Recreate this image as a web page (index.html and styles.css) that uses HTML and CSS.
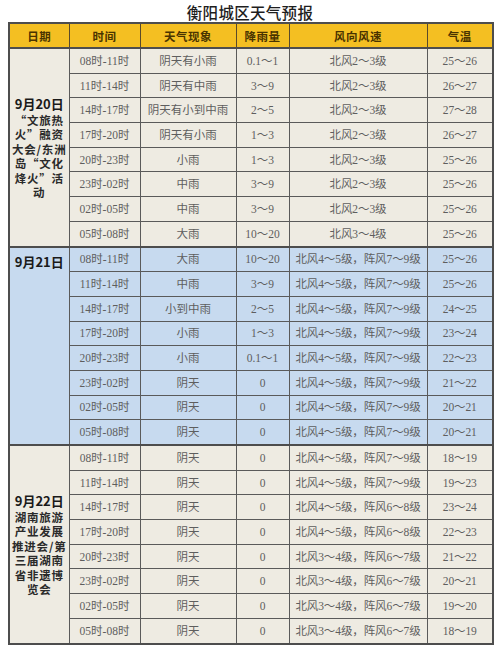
FILE: index.html
```html
<!DOCTYPE html>
<html lang="zh">
<head>
<meta charset="utf-8">
<link rel="stylesheet" href="styles.css">
</head>
<body>
<h1 class="title">衡阳城区天气预报</h1>
<table class="wx">
  <colgroup>
    <col class="c-date"><col class="c-time"><col class="c-wx"><col class="c-rain"><col class="c-wind"><col class="c-temp">
  </colgroup>
  <thead>
    <tr><th>日期</th><th>时间</th><th>天气现象</th><th>降雨量</th><th>风向风速</th><th>气温</th></tr>
  </thead>
  <tbody class="sec beige">
    <tr><td class="date" rowspan="8"><span class="d">9月20日</span><span class="note">“文旅热<br>火”融资<br>大会/东洲<br>岛“文化<br>烽火”活<br>动</span></td><td>08时-11时</td><td>阴天有小雨</td><td>0.1～1</td><td>北风2～3级</td><td>25～26</td></tr>
    <tr><td>11时-14时</td><td>阴天有中雨</td><td>3～9</td><td>北风2～3级</td><td>26～27</td></tr>
    <tr><td>14时-17时</td><td>阴天有小到中雨</td><td>2～5</td><td>北风2～3级</td><td>27～28</td></tr>
    <tr><td>17时-20时</td><td>阴天有小雨</td><td>1～3</td><td>北风2～3级</td><td>26～27</td></tr>
    <tr><td>20时-23时</td><td>小雨</td><td>1～3</td><td>北风2～3级</td><td>25～26</td></tr>
    <tr><td>23时-02时</td><td>中雨</td><td>3～9</td><td>北风2～3级</td><td>25～26</td></tr>
    <tr><td>02时-05时</td><td>中雨</td><td>3～9</td><td>北风2～3级</td><td>25～26</td></tr>
    <tr><td>05时-08时</td><td>大雨</td><td>10～20</td><td>北风3～4级</td><td>25～26</td></tr>
  </tbody>
  <tbody class="sec blue">
    <tr><td class="date top" rowspan="8"><span class="d">9月21日</span></td><td>08时-11时</td><td>大雨</td><td>10～20</td><td>北风4～5级，阵风7～9级</td><td>25～26</td></tr>
    <tr><td>11时-14时</td><td>中雨</td><td>3～9</td><td>北风4～5级，阵风7～9级</td><td>25～26</td></tr>
    <tr><td>14时-17时</td><td>小到中雨</td><td>2～5</td><td>北风4～5级，阵风7～9级</td><td>24～25</td></tr>
    <tr><td>17时-20时</td><td>小雨</td><td>1～3</td><td>北风4～5级，阵风7～9级</td><td>23～24</td></tr>
    <tr><td>20时-23时</td><td>小雨</td><td>0.1～1</td><td>北风4～5级，阵风7～9级</td><td>22～23</td></tr>
    <tr><td>23时-02时</td><td>阴天</td><td>0</td><td>北风4～5级，阵风7～9级</td><td>21～22</td></tr>
    <tr><td>02时-05时</td><td>阴天</td><td>0</td><td>北风4～5级，阵风7～9级</td><td>20～21</td></tr>
    <tr><td>05时-08时</td><td>阴天</td><td>0</td><td>北风4～5级，阵风7～9级</td><td>20～21</td></tr>
  </tbody>
  <tbody class="sec beige">
    <tr><td class="date" rowspan="8"><span class="d">9月22日</span><span class="note">湖南旅游<br>产业发展<br>推进会/第<br>三届湖南<br>省非遗博<br>览会</span></td><td>08时-11时</td><td>阴天</td><td>0</td><td>北风4～5级，阵风7～9级</td><td>18～19</td></tr>
    <tr><td>11时-14时</td><td>阴天</td><td>0</td><td>北风4～5级，阵风7～9级</td><td>19～23</td></tr>
    <tr><td>14时-17时</td><td>阴天</td><td>0</td><td>北风4～5级，阵风6～8级</td><td>23～24</td></tr>
    <tr><td>17时-20时</td><td>阴天</td><td>0</td><td>北风4～5级，阵风6～8级</td><td>22～23</td></tr>
    <tr><td>20时-23时</td><td>阴天</td><td>0</td><td>北风3～4级，阵风6～7级</td><td>21～22</td></tr>
    <tr><td>23时-02时</td><td>阴天</td><td>0</td><td>北风3～4级，阵风6～7级</td><td>20～21</td></tr>
    <tr><td>02时-05时</td><td>阴天</td><td>0</td><td>北风3～4级，阵风6～7级</td><td>19～20</td></tr>
    <tr><td>05时-08时</td><td>阴天</td><td>0</td><td>北风3～4级，阵风6～7级</td><td>18～19</td></tr>
  </tbody>
</table>
</body>
</html>
```
FILE: styles.css
```css
html, body {
  margin: 0;
  padding: 0;
  background: #ffffff;
}
body {
  font-family: "Liberation Serif", "Noto Sans CJK SC", serif;
  color: #5e5e5e;
}
.title {
  margin: 0;
  height: 22px;
  line-height: 24px;
  text-align: center;
  font-family: "Noto Sans CJK SC", sans-serif;
  font-size: 15.5px;
  font-weight: 500;
  color: #1e1e1e;
  letter-spacing: 0.3px;
}
.wx {
  margin-left: 8px;
  width: 484px;
  border-collapse: collapse;
  table-layout: fixed;
  border: 2px solid #4d4d4d;
}
.c-date { width: 60px; }
.c-time { width: 71px; }
.c-wx { width: 96px; }
.c-rain { width: 53px; }
.c-wind { width: 138px; }
.c-temp { width: 66px; }
.wx th {
  background: #f4bf22;
  height: 23px;
  padding: 0;
  font-family: "Noto Sans CJK SC", sans-serif;
  font-size: 11.5px;
  font-weight: 700;
  color: #4a3400;
  border: 1px solid #5a4a2a;
  letter-spacing: 0.5px;
}
.wx td {
  height: 23.7px;
  padding: 0;
  text-align: center;
  font-size: 11.5px;
  line-height: 14px;
  white-space: nowrap;
  border: 1px solid #5a5a5a;
}
.wx td:nth-child(5):not(.date),
.wx tr:not(:first-child) td:nth-child(4) {
  letter-spacing: -0.1px;
}
.sec {
  border-top: 2px solid #4d4d4d;
}
.beige td { background: #eeebe2; }
.blue td { background: #c7daef; }
.wx td.date {
  white-space: normal;
  font-family: "Noto Sans CJK SC", sans-serif;
  font-weight: 700;
  color: #2a2a2a;
  vertical-align: middle;
}
.wx td.date.top {
  vertical-align: top;
  padding-top: 5px;
}
.d {
  display: block;
  font-size: 13px;
  line-height: 18px;
  color: #1a1a1a;
}
.note {
  display: block;
  font-size: 11.5px;
  line-height: 14.5px;
  letter-spacing: 0.8px;
}
```
